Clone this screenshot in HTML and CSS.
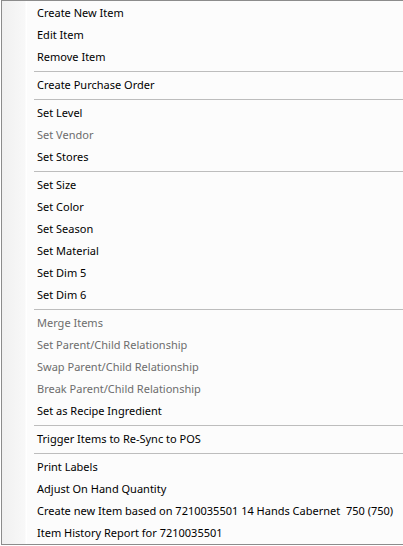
FILE: index.html
```html
<!DOCTYPE html>
<html>
<head>
<meta charset="utf-8">
<link rel="stylesheet" href="styles.css">
</head>
<body>
<div class="menu">
  <div class="item">Create New Item</div>
  <div class="item">Edit Item</div>
  <div class="item">Remove Item</div>
  <div class="sep"></div>
  <div class="item">Create Purchase Order</div>
  <div class="sep"></div>
  <div class="item">Set Level</div>
  <div class="item disabled">Set Vendor</div>
  <div class="item">Set Stores</div>
  <div class="sep"></div>
  <div class="item">Set Size</div>
  <div class="item">Set Color</div>
  <div class="item">Set Season</div>
  <div class="item">Set Material</div>
  <div class="item">Set Dim 5</div>
  <div class="item">Set Dim 6</div>
  <div class="sep"></div>
  <div class="item disabled">Merge Items</div>
  <div class="item disabled">Set Parent/Child Relationship</div>
  <div class="item disabled">Swap Parent/Child Relationship</div>
  <div class="item disabled">Break Parent/Child Relationship</div>
  <div class="item">Set as Recipe Ingredient</div>
  <div class="sep"></div>
  <div class="item">Trigger Items to Re-Sync to POS</div>
  <div class="sep"></div>
  <div class="item">Print Labels</div>
  <div class="item">Adjust On Hand Quantity</div>
  <div class="item">Create new Item based on 7210035501 14 Hands Cabernet  750 (750)</div>
  <div class="item">Item History Report for 7210035501</div>
</div>
</body>
</html>
```

FILE: styles.css
```css
html, body {
  margin: 0;
  padding: 0;
  background: #ffffff;
}
body {
  width: 403px;
  height: 546px;
  overflow: hidden;
  padding-left: 1px;
  box-sizing: border-box;
  font-family: "Noto Sans", "Open Sans", sans-serif;
  font-size: 11px;
}
.menu {
  width: 420px;
  border: 1px solid #8c8c8c;
  padding: 1px 0 0 0;
  background:
    linear-gradient(to right, #f0f0f0 0px, #f8f8f8 23px, #ffffff 24px) no-repeat;
  background-size: 25px 100%;
  background-color: #fcfcfc;
}
.item {
  height: 22px;
  line-height: 22px;
  padding-left: 35px;
  color: #000000;
  white-space: pre;
}
.item.disabled {
  color: #6d6d6d;
}
.sep {
  height: 6px;
  display: flex;
  align-items: center;
  padding-left: 32px;
}
.sep::before {
  content: "";
  display: block;
  flex: 1;
  height: 1px;
  background: #bdbdbd;
}
```
